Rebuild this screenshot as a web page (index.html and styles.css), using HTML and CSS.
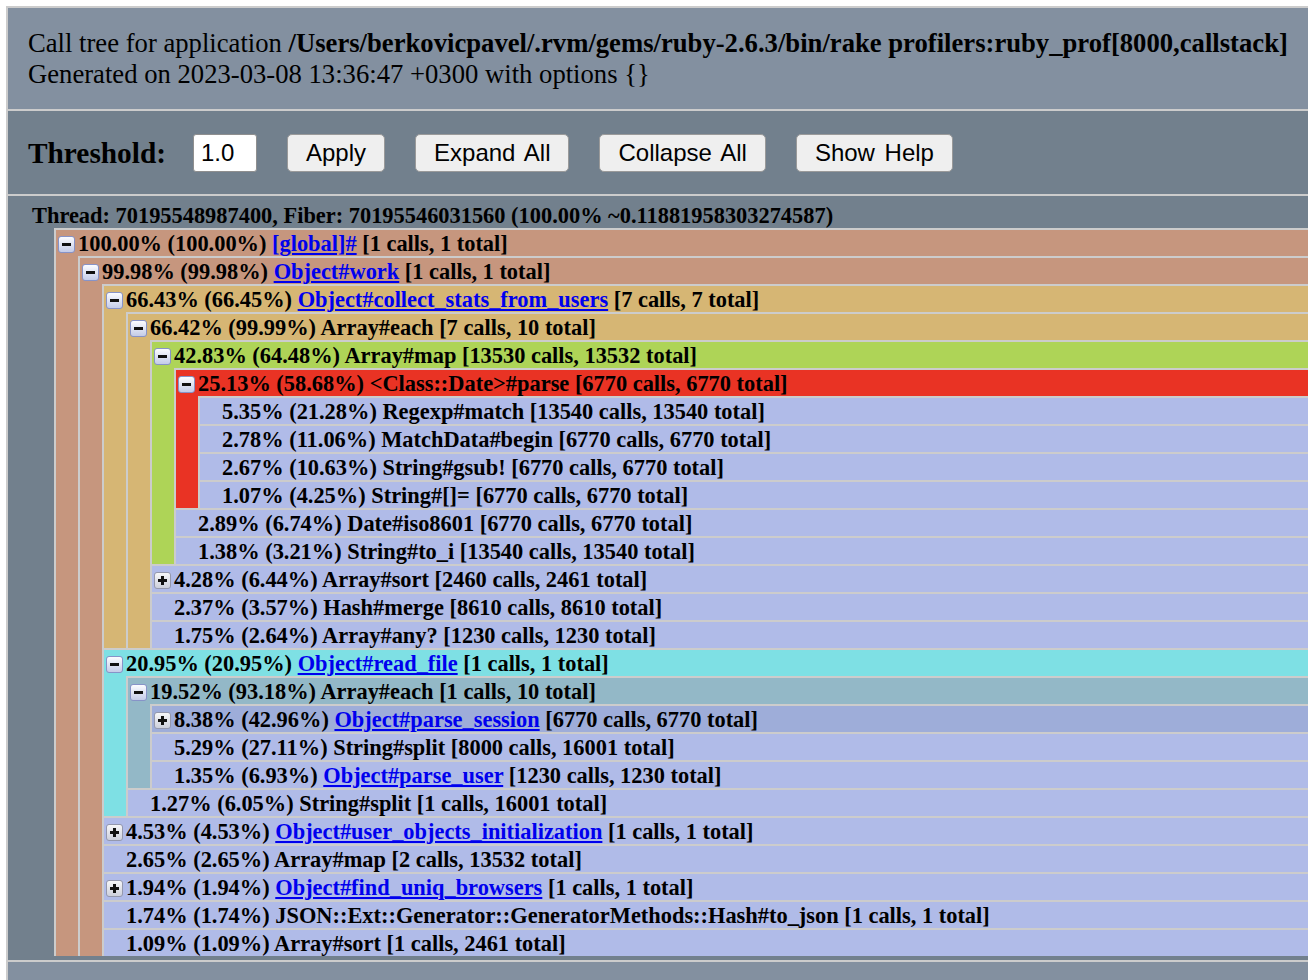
FILE: index.html
```html
<!DOCTYPE html>
<html>
<head>
<meta charset="utf-8">
<title>ruby-prof call tree</title>
<link rel="stylesheet" href="styles.css">
</head>
<body>
<div class="page">
  <div class="titlebar">
    <div>Call tree for application <b>/Users/berkovicpavel/.rvm/gems/ruby-2.6.3/bin/rake profilers:ruby_prof[8000,callstack]</b></div>
    <div>Generated on 2023-03-08 13:36:47 +0300 with options {}</div>
  </div>
  <div class="commands">
    <span class="threshold-label">Threshold:</span>
    <input class="threshold" type="text" value="1.0">
    <button class="btn">Apply</button>
    <button class="btn">Expand All</button>
    <button class="btn">Collapse All</button>
    <button class="btn">Show Help</button>
  </div>
  <div class="thread">
    <div class="thread-title">Thread: 70195548987400, Fiber: 70195546031560 (100.00% ~0.11881958303274587)</div>
    <ul class="tree">
      <li class="c-brown">
        <div class="row"><span class="slot"><span class="tg minus"></span></span><span>100.00% (100.00%) <a href="#">[global]#</a> [1 calls, 1 total]</span></div>
        <ul>
          <li class="c-brown">
            <div class="row"><span class="slot"><span class="tg minus"></span></span><span>99.98% (99.98%) <a href="#">Object#work</a> [1 calls, 1 total]</span></div>
            <ul>
              <li class="c-tan">
                <div class="row"><span class="slot"><span class="tg minus"></span></span><span>66.43% (66.45%) <a href="#">Object#collect_stats_from_users</a> [7 calls, 7 total]</span></div>
                <ul>
                  <li class="c-tan">
                    <div class="row"><span class="slot"><span class="tg minus"></span></span><span>66.42% (99.99%) Array#each [7 calls, 10 total]</span></div>
                    <ul>
                      <li class="c-green">
                        <div class="row"><span class="slot"><span class="tg minus"></span></span><span>42.83% (64.48%) Array#map [13530 calls, 13532 total]</span></div>
                        <ul>
                          <li class="c-red">
                            <div class="row"><span class="slot"><span class="tg minus"></span></span><span>25.13% (58.68%) &lt;Class::Date&gt;#parse [6770 calls, 6770 total]</span></div>
                            <ul>
                              <li class="c-light"><div class="row"><span class="slot"></span><span>5.35% (21.28%) Regexp#match [13540 calls, 13540 total]</span></div></li>
                              <li class="c-light"><div class="row"><span class="slot"></span><span>2.78% (11.06%) MatchData#begin [6770 calls, 6770 total]</span></div></li>
                              <li class="c-light"><div class="row"><span class="slot"></span><span>2.67% (10.63%) String#gsub! [6770 calls, 6770 total]</span></div></li>
                              <li class="c-light"><div class="row"><span class="slot"></span><span>1.07% (4.25%) String#[]= [6770 calls, 6770 total]</span></div></li>
                            </ul>
                          </li>
                          <li class="c-light"><div class="row"><span class="slot"></span><span>2.89% (6.74%) Date#iso8601 [6770 calls, 6770 total]</span></div></li>
                          <li class="c-light"><div class="row"><span class="slot"></span><span>1.38% (3.21%) String#to_i [13540 calls, 13540 total]</span></div></li>
                        </ul>
                      </li>
                      <li class="c-light"><div class="row"><span class="slot"><span class="tg plus"></span></span><span>4.28% (6.44%) Array#sort [2460 calls, 2461 total]</span></div></li>
                      <li class="c-light"><div class="row"><span class="slot"></span><span>2.37% (3.57%) Hash#merge [8610 calls, 8610 total]</span></div></li>
                      <li class="c-light"><div class="row"><span class="slot"></span><span>1.75% (2.64%) Array#any? [1230 calls, 1230 total]</span></div></li>
                    </ul>
                  </li>
                </ul>
              </li>
              <li class="c-cyan">
                <div class="row"><span class="slot"><span class="tg minus"></span></span><span>20.95% (20.95%) <a href="#">Object#read_file</a> [1 calls, 1 total]</span></div>
                <ul>
                  <li class="c-teal">
                    <div class="row"><span class="slot"><span class="tg minus"></span></span><span>19.52% (93.18%) Array#each [1 calls, 10 total]</span></div>
                    <ul>
                      <li class="c-mid"><div class="row"><span class="slot"><span class="tg plus"></span></span><span>8.38% (42.96%) <a href="#">Object#parse_session</a> [6770 calls, 6770 total]</span></div></li>
                      <li class="c-light"><div class="row"><span class="slot"></span><span>5.29% (27.11%) String#split [8000 calls, 16001 total]</span></div></li>
                      <li class="c-light"><div class="row"><span class="slot"></span><span>1.35% (6.93%) <a href="#">Object#parse_user</a> [1230 calls, 1230 total]</span></div></li>
                    </ul>
                  </li>
                  <li class="c-light"><div class="row"><span class="slot"></span><span>1.27% (6.05%) String#split [1 calls, 16001 total]</span></div></li>
                </ul>
              </li>
              <li class="c-light"><div class="row"><span class="slot"><span class="tg plus"></span></span><span>4.53% (4.53%) <a href="#">Object#user_objects_initialization</a> [1 calls, 1 total]</span></div></li>
              <li class="c-light"><div class="row"><span class="slot"></span><span>2.65% (2.65%) Array#map [2 calls, 13532 total]</span></div></li>
              <li class="c-light"><div class="row"><span class="slot"><span class="tg plus"></span></span><span>1.94% (1.94%) <a href="#">Object#find_uniq_browsers</a> [1 calls, 1 total]</span></div></li>
              <li class="c-light"><div class="row"><span class="slot"></span><span>1.74% (1.74%) JSON::Ext::Generator::GeneratorMethods::Hash#to_json [1 calls, 1 total]</span></div></li>
              <li class="c-light"><div class="row"><span class="slot"></span><span>1.09% (1.09%) Array#sort [1 calls, 2461 total]</span></div></li>
            </ul>
          </li>
        </ul>
      </li>
    </ul>
  </div>
  <div class="sentinel"></div>
</div>
</body>
</html>
```

FILE: styles.css
```css
html, body {
  margin: 0;
  padding: 0;
  background: #ffffff;
  overflow: hidden;
}

body {
  font-family: "Liberation Serif", "Times New Roman", serif;
  color: #000000;
}

.page {
  margin: 6px 0 0 6px;
}

.titlebar {
  background: #8390a0;
  border-top: 2px solid #cccccc;
  border-left: 2px solid #cccccc;
  padding: 20px;
  font-size: 26.67px;
  line-height: 30.5px;
  white-space: nowrap;
}

.commands {
  background: #72808d;
  border-top: 2px solid #cccccc;
  border-left: 2px solid #cccccc;
  padding: 23px 20px 22px;
  display: flex;
  align-items: center;
  gap: 30px;
}

.threshold-label {
  font-size: 29.33px;
  font-weight: bold;
  margin-right: -3px;
}

.threshold {
  box-sizing: border-box;
  width: 64px;
  height: 38px;
  margin: 0;
  padding: 0 7px;
  font-family: "Liberation Sans", Arial, sans-serif;
  font-size: 24px;
  color: #000000;
  background: #ffffff;
  border: 1px solid #8f8f8f;
  border-radius: 3px;
}

.btn {
  box-sizing: border-box;
  height: 38px;
  margin: 0;
  padding: 0 18px;
  font-family: "Liberation Sans", Arial, sans-serif;
  font-size: 24px;
  word-spacing: 3px;
  color: #000000;
  background: #efefef;
  border: 1px solid #9a9a9a;
  border-radius: 5px;
}

.thread {
  background: #72808d;
  border-top: 2px solid #cccccc;
  border-left: 2px solid #cccccc;
  padding: 6px 0 4px 24px;
  font-weight: bold;
  font-size: 22.4px;
  line-height: 26px;
}

.thread-title {
  box-sizing: border-box;
  height: 26px;
  padding-top: 1px;
  white-space: nowrap;
}

ul {
  list-style: none;
  margin: 0;
  padding: 0;
}

li {
  margin-left: 22px;
  border-top: 2px solid #cccccc;
  border-left: 2px solid #cccccc;
  white-space: nowrap;
}

.row {
  box-sizing: border-box;
  display: flex;
  align-items: center;
  height: 26px;
  padding-top: 2px;
}

.slot {
  flex: none;
  width: 22px;
  height: 24px;
  display: flex;
  align-items: center;
}

.tg {
  position: relative;
  flex: none;
  box-sizing: border-box;
  width: 17px;
  height: 17px;
  margin-left: 2px;
  border-radius: 3px;
}

.tg.minus {
  border: 1px solid #8793c8;
  background: linear-gradient(#fbfcff, #c4cce8);
}

.tg.plus {
  border: 1px solid #9498ad;
  background: linear-gradient(#f6f6f8, #cdd0dc);
}

.tg::before {
  content: "";
  position: absolute;
  left: 3px;
  right: 3px;
  top: 6px;
  height: 3px;
  background: #111111;
}

.tg.plus::after {
  content: "";
  position: absolute;
  top: 3px;
  bottom: 3px;
  left: 6px;
  width: 3px;
  background: #111111;
}

a {
  color: #0000ee;
  text-decoration: underline;
}

.c-brown { background: #c6967e; }
.c-tan { background: #d6b674; }
.c-green { background: #aed457; }
.c-red { background: #e93324; }
.c-light { background: #b0bbe8; }
.c-cyan { background: #7ee0e4; }
.c-teal { background: #93b8c7; }
.c-mid { background: #9eadd9; }

.sentinel {
  background: #8390a0;
  border-top: 2px solid #cccccc;
  border-left: 2px solid #cccccc;
  height: 400px;
}
```
